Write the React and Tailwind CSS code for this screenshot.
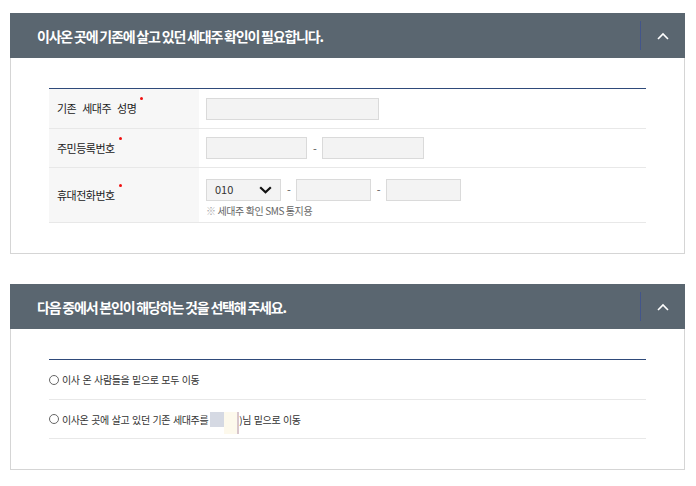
import React from "react";

function Header({ title }) {
  return (
    <div className="h-[45px] bg-[#5a6670] flex items-center">
      <h2 className="flex-1 pl-[27px] text-white font-bold text-[14px] tracking-[-1.2px] leading-none">
        {title}
      </h2>
      <div className="w-px h-[29px] bg-[#43558a]" />
      <button className="w-[44px] h-full flex items-center justify-center">
        <svg width="12" height="8" viewBox="0 0 12 8">
          <path d="M1 7 L6 2 L11 7" stroke="white" strokeWidth="1.6" fill="none" />
        </svg>
      </button>
    </div>
  );
}

function Label({ children }) {
  return (
    <div className="w-[150px] shrink-0 self-stretch bg-[#f7f7f7] flex items-center pl-[8px] text-[11px] text-[#222] tracking-[-0.5px] [word-spacing:4px]">
      <span className="relative">
        {children}
        <span className="absolute -right-[7px] -top-[3px] w-[3px] h-[3px] rounded-full bg-[#f01010]" />
      </span>
    </div>
  );
}

function Input({ w }) {
  return <div className={`${w} h-[22px] bg-[#f3f3f3] border border-[#dadada]`} />;
}

function Dash() {
  return <span className="text-[11px] text-[#555] pl-[6px] pr-[5px]">-</span>;
}

function Radio({ children }) {
  return (
    <div className="flex items-center text-[10px] text-[#333] tracking-[-0.4px] [word-spacing:1px]">
      <span className="w-[10px] h-[10px] rounded-full border border-[#666] mr-[3px] shrink-0" />
      {children}
    </div>
  );
}

export default function App() {
  return (
    <div className="bg-white w-[696px] h-[486px] pt-[13px] pl-[10px] font-['Noto_Sans_CJK_KR','Noto_Sans',sans-serif]">
      <div className="w-[675px]">
        <Header title="이사온 곳에 기존에 살고 있던 세대주 확인이 필요합니다." />
        <div className="border-x border-b border-[#d5d5d5] px-[38px] pt-[30px] pb-[30px]">
          <div className="border-t border-[#2f4a7a]">
            <div className="h-[40px] flex items-center border-b border-[#e8e8e8]">
              <Label>기존 세대주 성명</Label>
              <div className="pl-[7px] flex items-center">
                <Input w="w-[173px]" />
              </div>
            </div>
            <div className="h-[39px] flex items-center border-b border-[#e8e8e8]">
              <Label>주민등록번호</Label>
              <div className="pl-[7px] flex items-center">
                <Input w="w-[101px]" />
                <Dash />
                <Input w="w-[102px]" />
              </div>
            </div>
            <div className="h-[55px] flex items-center border-b border-[#e8e8e8]">
              <Label>휴대전화번호</Label>
              <div className="pl-[7px] flex flex-col pt-[6px]">
                <div className="flex items-center">
                  <div className="w-[75px] h-[22px] bg-[#f3f3f3] border border-[#dadada] flex items-center justify-between pl-[8px] pr-[8px]">
                    <span className="text-[11px] text-[#333]">010</span>
                    <svg width="13" height="8" viewBox="0 0 13 8">
                      <path d="M1.2 1.2 L6.5 6.3 L11.8 1.2" stroke="#111" strokeWidth="2.2" fill="none" />
                    </svg>
                  </div>
                  <Dash />
                  <Input w="w-[75px]" />
                  <Dash />
                  <Input w="w-[75px]" />
                </div>
                <div className="mt-[3px] text-[10px] leading-[14px] text-[#666] tracking-[-0.4px]">
                  <span className="text-[#aaa]">※</span> 세대주 확인 SMS 통지용
                </div>
              </div>
            </div>
          </div>
        </div>

        <div className="h-[30px]" />

        <Header title="다음 중에서 본인이 해당하는 것을 선택해 주세요." />
        <div className="border-x border-b border-[#d5d5d5] px-[38px] pt-[30px] pb-[30px]">
          <div className="border-t border-[#2f4a7a]">
            <div className="h-[40px] flex items-center border-b border-[#e8e8e8]">
              <Radio>이사 온 사람들을 밑으로 모두 이동</Radio>
            </div>
            <div className="h-[39px] flex items-center border-b border-[#e8e8e8]">
              <Radio>
                <span>이사온 곳에 살고 있던 기존 세대주를</span>
                <span className="flex items-start h-[22px] mt-[8px] ml-[2px]">
                  <span className="w-[14px] h-[15px] bg-[#d5d9e3]" />
                  <span className="w-[13px] h-[22px] bg-[#fdf9ec]" />
                  <span className="w-[2px] h-[22px] bg-[#d8c6cc]" />
                </span>
                <span>)님 밑으로 이동</span>
              </Radio>
            </div>
          </div>
        </div>
      </div>
    </div>
  );
}
